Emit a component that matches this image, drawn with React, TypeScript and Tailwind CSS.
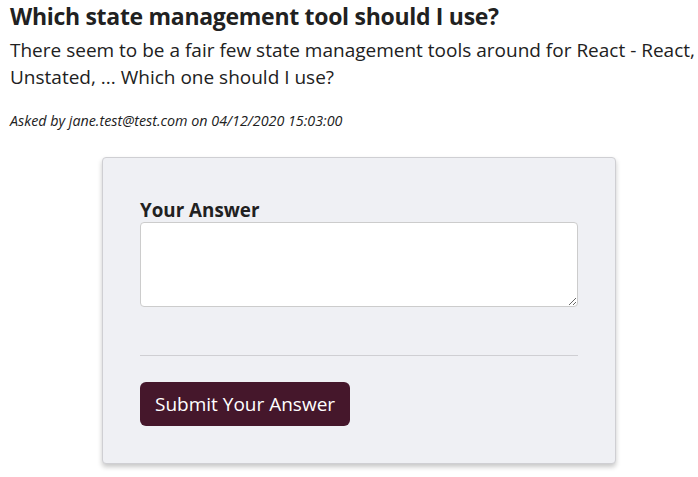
export default function App() {
  return (
    <div className="w-[698px] h-[477px] overflow-hidden bg-white font-['Open_Sans',sans-serif] text-[#212121]">
      <div className="w-[708px] pl-[10px]">
        <h1 className="text-[23px] font-bold leading-[30px] pt-[1px] tracking-[-0.3px]">
          Which state management tool should I use?
        </h1>
        <p className="w-[780px] text-[19px] leading-[27px] mt-[6px]">
          There seem to be a fair few state management tools around for React - React, Redux,
          Unstated, ... Which one should I use?
        </p>
        <div className="text-[14.3px] italic leading-[20px] mt-[20px]">
          Asked by jane.test@test.com on 04/12/2020 15:03:00
        </div>
        <div className="mx-auto mt-[26px] w-[514px] rounded border border-[#cfcfd3] bg-[#eff0f4] px-[37px] pt-[40px] pb-[37px] shadow-[0_3px_5px_rgba(0,0,0,0.22)]">
          <label className="block text-[18.8px] font-bold leading-[24px]">Your Answer</label>
          <textarea className="block h-[85px] w-full rounded border border-[#cccccc] bg-white resize-y" />
          <div className="mt-[48px] h-px bg-[#cfcfd3]" />
          <button className="mt-[26px] h-[44px] rounded-md bg-[#45172b] px-[15px] text-[19px] text-white">
            Submit Your Answer
          </button>
        </div>
      </div>
    </div>
  );
}
